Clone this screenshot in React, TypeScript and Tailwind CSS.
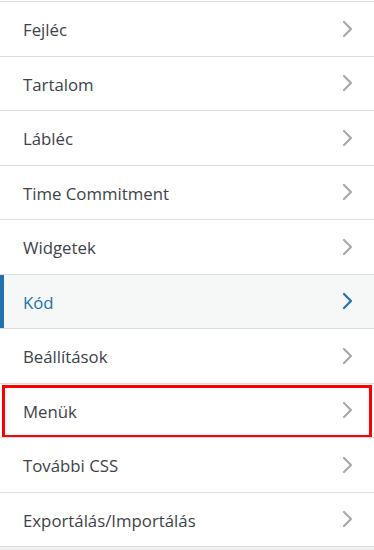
import React from 'react';

interface Section {
    title: string;
    active?: boolean;
    highlighted?: boolean;
}

const sections: Section[] = [
    { title: "Fejléc" },
    { title: "Tartalom" },
    { title: "Lábléc" },
    { title: "Time Commitment" },
    { title: "Widgetek" },
    { title: "Kód", active: true },
    { title: "Beállítások" },
    { title: "Menük", highlighted: true },
    { title: "További CSS" },
    { title: "Exportálás/Importálás" },
];

const Chevron = ({ active }: { active?: boolean }) => (
    <svg width="11" height="18" viewBox="0 0 11 18" fill="none">
        <polyline
            points="2,2 9,9 2,16"
            stroke={active ? "#2271b1" : "#a7aaad"}
            strokeWidth="2.2"
            strokeLinecap="round"
            strokeLinejoin="round"
        />
    </svg>
);

const App: React.FC = () => {
    return (
        <div className="h-[550px] w-[374px] overflow-hidden bg-[#f0f0f1]" style={{ fontFamily: '"Open Sans", "Noto Sans", sans-serif' }}>
            <ul className="bg-white pt-[1px]">
                {sections.map((section) => (
                    <li
                        key={section.title}
                        className={
                            section.active
                                ? "relative flex h-[54.5px] items-center justify-between border-t border-[#dcdcde] bg-[#f6f7f7] pl-[23px] pr-[21px]"
                                : "relative flex h-[54.5px] items-center justify-between border-t border-[#dcdcde] bg-white pl-[23px] pr-[21px]"
                        }
                    >
                        {/* 선택된 항목 왼쪽 파란 막대 */}
                        {section.active && <div className="absolute left-0 top-0 bottom-0 w-[4px] bg-[#2271b1]" />}
                        <span className={section.active ? "pt-[2px] text-[16.8px] text-[#2271b1]" : "pt-[2px] text-[16.8px] text-[#3c434a]"}>
                            {section.title}
                        </span>
                        <Chevron active={section.active} />
                        {section.highlighted && (
                            <div className="absolute left-[2px] right-[2px] top-[1px] bottom-[-1px] border-[3px] border-[#ff0000]" />
                        )}
                    </li>
                ))}
                <li className="h-[1px] bg-[#dcdcde]" />
            </ul>
        </div>
    );
};

export default App;
